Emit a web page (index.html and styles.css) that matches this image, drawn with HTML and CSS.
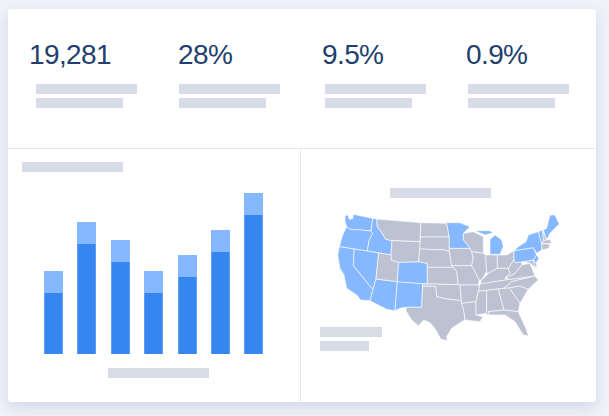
FILE: index.html
```html
<!DOCTYPE html>
<html lang="en">
<head>
<meta charset="utf-8">
<title>Dashboard</title>
<link rel="stylesheet" href="styles.css">
</head>
<body>
<main class="card">
  <section class="stats">
    <div class="stat"><div class="num num-a">19,281</div><div class="ph ph-l"></div><div class="ph ph-m"></div></div>
    <div class="stat"><div class="num num-b">28%</div><div class="ph ph-l"></div><div class="ph ph-m"></div></div>
    <div class="stat"><div class="num num-c">9.5%</div><div class="ph ph-l"></div><div class="ph ph-m"></div></div>
    <div class="stat"><div class="num num-d">0.9%</div><div class="ph ph-l"></div><div class="ph ph-m"></div></div>
  </section>
  <section class="panels">
    <div class="panel chart">
      <div class="ph ph-l"></div>
      <div class="bars">
        <div class="bar bar-1"><span class="top"></span></div>
        <div class="bar bar-2"><span class="top"></span></div>
        <div class="bar bar-3"><span class="top"></span></div>
        <div class="bar bar-4"><span class="top"></span></div>
        <div class="bar bar-5"><span class="top"></span></div>
        <div class="bar bar-6"><span class="top"></span></div>
        <div class="bar bar-7"><span class="top"></span></div>
      </div>
      <div class="ph ph-l chart-label"></div>
    </div>
    <div class="panel geo">
      <div class="ph ph-l geo-title"></div>
      <svg class="map" viewBox="335 205 230 140" width="230" height="140" aria-label="US map">
        <g transform="translate(320 180) scale(.3333)">
          <g class="blue">
            <path d="M75 108L84 104L88 118L98 116L100 103L158 115L153 153L125 150L90 148L80 140L75 125Z"/>
            <path d="M80 140L90 148L125 150L153 153L158 160L147 183L142 213L58 200L68 165Z"/>
            <path d="M158 115L170 117L172 140L185 158L197 178L216 182L213 225L142 213L147 183L158 160L153 153Z"/>
            <path d="M102 207L142 213L176 219L168 297L160 325L155 325L100 257Z"/>
            <path d="M58 200L102 207L100 257L155 325L160 325L150 362L122 360L110 345L80 325L72 285L60 265L53 225Z"/>
            <path d="M168 297L232 305L225 392L200 388L150 362L160 325Z"/>
            <path d="M232 305L308 311L305 382L258 382L240 385L225 392Z"/>
            <path d="M235 247L296 245L322 250L322 312L308 311L232 305Z"/>
          </g>
          <g class="grey">
            <path d="M170 117L303 128L300 185L216 182L197 178L185 158L172 140Z"/>
            <path d="M303 128L380 130L388 171L301 171Z"/>
            <path d="M301 171L388 171L388 215L375 210L299 207Z"/>
            <path d="M216 182L300 185L299 207L296 245L235 247L213 240L213 225Z"/>
            <path d="M299 207L375 210L388 215L395 257L400 262L322 262L322 250L296 245Z"/>
            <path d="M176 219L213 225L213 240L235 247L232 305L168 297Z"/>
            <path d="M322 262L400 262L410 275L415 314L322 312Z"/>
            <path d="M308 311L322 312L415 314L420 315L424 362L380 357L350 350L347 320L308 318Z"/>
            <path d="M308 318L347 320L350 350L380 357L424 362L425 370L432 395L435 420L425 425L395 445L380 470L382 483L362 477L348 450L330 428L312 420L295 437L275 420L258 392L258 382L305 382Z"/>
            <path d="M388 205L450 205L455 215L460 235L455 257L395 257L388 215Z"/>
            <path d="M395 257L455 257L460 265L478 300L475 315L420 315L415 314L410 275L400 262Z"/>
            <path d="M430 160L460 155L490 170L490 220L455 215L450 205L430 180Z"/>
            <path d="M455 215L490 220L497 225L500 275L485 300L478 300L460 265L455 257L460 235Z"/>
            <path d="M497 225L532 225L532 265L503 282L500 275Z"/>
            <path d="M532 225L560 225L582 212L582 240L565 265L532 265Z"/>
            <path d="M480 312L485 300L503 282L532 265L565 265L570 280L555 295L570 298Z"/>
            <path d="M475 334L480 312L570 298L645 288L575 305L552 325Z"/>
            <path d="M420 315L475 315L478 322L475 334L468 365L425 370L424 362Z"/>
            <path d="M425 370L468 365L468 405L490 410L480 425L435 420L432 395Z"/>
            <path d="M475 334L500 331L500 400L468 405L468 365Z"/>
            <path d="M500 331L535 327L552 390L505 395L508 405L500 405Z"/>
            <path d="M535 327L568 323L600 370L595 395L552 390Z"/>
            <path d="M568 323L598 318L625 328L600 370Z"/>
            <path d="M552 325L575 305L645 288L655 300L625 328L598 318L568 323Z"/>
            <path d="M555 295L585 280L605 255L630 250L645 288L570 298Z"/>
            <path d="M565 265L582 240L587 248L605 243L605 255L585 280L555 295L570 280Z"/>
            <path d="M587 248L640 240L648 265L630 250L605 243Z"/>
            <path d="M505 395L552 390L595 395L620 450L625 468L610 465L585 425L555 405L508 405Z"/>
            <path d="M667 150L678 175L680 180L670 182Z"/>
            <path d="M665 190L670 182L690 178L695 190L665 192Z"/>
            <path d="M665 192L688 192L688 205L665 210Z"/>
          </g>
          <g class="blue">
            <path d="M380 128L420 128L450 140L430 160L430 180L450 205L388 205L388 171L380 130Z"/>
            <path d="M465 152L510 152L520 158L495 165Z"/>
            <path d="M510 178L525 165L545 180L550 200L540 223L510 223Z"/>
            <path d="M582 212L640 203L650 225L640 240L587 248L582 240Z"/>
            <path d="M595 200L618 185L625 165L655 155L665 190L665 210L650 220L640 203L582 212Z"/>
            <path d="M650 225L657 235L648 250L640 240Z"/>
            <path d="M640 240L648 250L652 262L645 258Z"/>
            <path d="M655 155L667 150L670 182L665 190Z"/>
            <path d="M680 145L690 105L705 105L718 132L690 160L682 176L678 175L670 150Z"/>
          </g>
        </g>
      </svg>
      <div class="legend">
        <div class="ph ph-s"></div>
        <div class="ph ph-xs"></div>
      </div>
    </div>
  </section>
</main>
</body>
</html>
```
FILE: styles.css
```css
* { box-sizing: border-box; }
html, body { margin: 0; height: 416px; overflow: hidden; }
body {
  background: #f1f3f9;
  padding: 9px 13px 0 8px;
  font-family: "Liberation Sans", Arial, sans-serif;
}
.card {
  width: 588px;
  height: 393px;
  background: #fff;
  border-radius: 3px;
  box-shadow: 0 5px 16px rgba(140, 155, 200, .34);
  display: flex;
  flex-direction: column;
}
.stats {
  height: 140px;
  margin-right: -2px;
  padding-left: 28px;
  display: grid;
  grid-template-columns: 143px 146px 143px 1fr;
  border-bottom: 1.5px solid #e3e7f0;
}
.stat { padding-top: 30px; }
.num {
  font-size: 28px;
  line-height: 32px;
  height: 45px;
  color: #1f3f6e;
  letter-spacing: -.6px;
}
.num-a { margin-left: -7px; }
.num-b { margin-left: -1px; }
.num-c { margin-left: -3px; }
.num-d { margin-left: -2px; }
.ph { height: 10px; background: #d8dce7; }
.ph-l { width: 101px; }
.ph-m { width: 87px; margin-top: 4px; }
.ph-s { width: 62px; }
.ph-xs { width: 49px; margin-top: 4px; }
.panels { flex: 1; display: flex; min-height: 0; }
.panel { position: relative; }
.chart {
  width: 293px;
  padding: 13px 0 0 14px;
  border-right: 1.5px solid #e3e7f0;
}
.bars {
  height: 182px;
  margin-left: 22px;
  display: flex;
  align-items: flex-end;
  gap: 14.4px;
}
.bar {
  width: 19px;
  background: #3586ee;
  box-shadow: inset 1px 0 #5d9ff3, inset -1px 0 #5d9ff3;
  position: relative;
}
.top {
  position: absolute;
  top: 0;
  left: 0;
  right: 0;
  height: 22px;
  background: #85b8ff;
}
.bar-1 { height: 83px; }
.bar-2 { height: 132px; }
.bar-3 { height: 114px; }
.bar-4 { height: 83px; }
.bar-5 { height: 99px; }
.bar-6 { height: 124px; }
.bar-7 { height: 161px; }
.chart-label { margin: 14px 0 0 86px; }
.geo { flex: 1; padding: 39px 0 0 19px; }
.geo-title { margin-left: 70px; }
.map {
  position: absolute;
  left: 34px;
  top: 56px;
}
.map path { stroke: #fff; stroke-width: 1.8; stroke-linejoin: round; }
.blue path { fill: #85b8ff; }
.grey path { fill: #bcc2d2; }
.legend { margin-top: 129px; }
```
